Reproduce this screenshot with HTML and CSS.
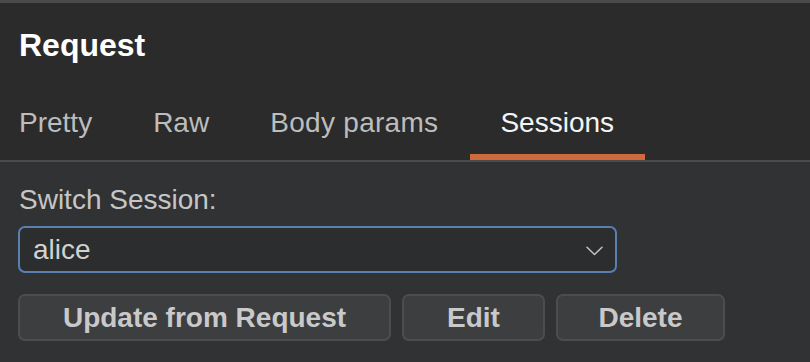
FILE: index.html
```html
<!DOCTYPE html>
<html lang="en">
<head>
<meta charset="utf-8">
<title>Request - Sessions</title>
<link rel="stylesheet" href="styles.css">
</head>
<body>
<div class="topbar"></div>
<header class="header">
  <h1 class="title">Request</h1>
  <nav class="tabs">
    <span class="tab">Pretty</span>
    <span class="tab">Raw</span>
    <span class="tab tab-wide">Body params</span>
    <span class="tab tab-active">Sessions</span>
  </nav>
</header>
<main class="panel">
  <label class="label">Switch Session:</label>
  <div class="select">
    <span class="select-value">alice</span>
    <svg class="chevron" width="17" height="10" viewBox="0 0 17 10"><path d="M1 1.2 L8.5 8.5 L16 1.2" fill="none" stroke="#c4c4c4" stroke-width="1.5" stroke-linecap="round" stroke-linejoin="round"/></svg>
  </div>
  <div class="actions">
    <button class="btn btn-update">Update from Request</button>
    <button class="btn btn-edit">Edit</button>
    <button class="btn btn-delete">Delete</button>
  </div>
</main>
</body>
</html>
```
FILE: styles.css
```css
html, body {
  margin: 0;
  padding: 0;
}
body {
  width: 810px;
  height: 362px;
  overflow: hidden;
  background: #313234;
  font-family: "Liberation Sans", Arial, Helvetica, sans-serif;
}
.topbar {
  height: 3px;
  background: #4a4a4c;
}
.header {
  background: #2b2b2b;
  border-bottom: 2px solid #4a4b4d;
}
.title {
  margin: 0;
  padding: 22px 0 0 19px;
  font-size: 32px;
  line-height: 40px;
  font-weight: bold;
  color: #ffffff;
}
.tabs {
  display: flex;
  margin-top: 38px;
}
.tab {
  font-size: 28px;
  line-height: 40px;
  padding: 0 30px 11px 31px;
  border-bottom: 6px solid transparent;
  color: #bdbdbd;
}
.tab:first-child {
  padding-left: 19px;
}
.tab-wide {
  letter-spacing: 0.3px;
  padding-right: 32px;
}
.tab-active {
  color: #f4f4f4;
  border-bottom-color: #cf6a3d;
  padding-left: 30px;
  padding-right: 31px;
}
.panel {
  padding: 20px 0 0 18px;
  display: flex;
  flex-direction: column;
  align-items: flex-start;
}
.label {
  font-size: 28px;
  line-height: 36px;
  color: #c6c6c6;
  padding-left: 1px;
}
.select {
  margin-top: 8px;
  box-sizing: border-box;
  width: 599px;
  height: 47px;
  border: 2px solid #5a7fb1;
  border-radius: 7px;
  background: #2c2d2f;
  display: flex;
  align-items: center;
  justify-content: space-between;
  padding: 0 12px 0 13px;
}
.select-value {
  font-size: 28px;
  color: #d2d2d2;
  line-height: 36px;
}
.chevron {
  display: block;
  margin-top: 2px;
}
.actions {
  margin-top: 21px;
  display: flex;
  gap: 11px;
}
.btn {
  box-sizing: border-box;
  height: 47px;
  border: 2px solid #4c4d4f;
  border-radius: 7px;
  background: #3d3e40;
  color: #c9c9c9;
  font-family: inherit;
  font-size: 28px;
  font-weight: bold;
  padding: 0;
  text-align: center;
}
.btn-update { width: 373px; }
.btn-edit { width: 143px; }
.btn-delete { width: 169px; }
```
